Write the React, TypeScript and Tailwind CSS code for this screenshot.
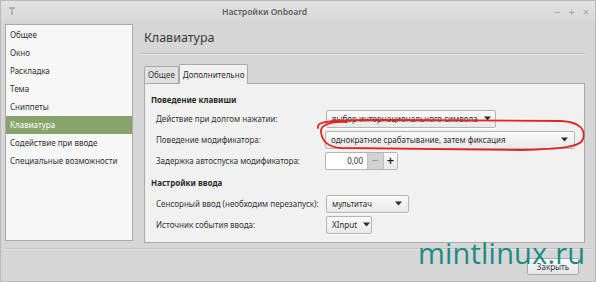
import React from "react";

const items = [
  "Общее",
  "Окно",
  "Раскладка",
  "Тема",
  "Сниппеты",
  "Клавиатура",
  "Содействие при вводе",
  "Специальные возможности",
];

function Arrow() {
  return (
    <svg width="7" height="5" viewBox="0 0 7 5" className="shrink-0">
      <path d="M0 0.5 L7 0.5 L3.5 4.5 Z" fill="#2b2b2b" />
    </svg>
  );
}

function Combo({ text, width }: { text: string; width: string }) {
  return (
    <div
      className={`${width} h-[18px] flex items-center justify-between gap-[6px] pl-[5px] pr-[6px] rounded-[2px] border border-[#b4b4b4] bg-gradient-to-b from-[#fafafa] to-[#e9e9e9] text-[#2e2e2e] shadow-[0_1px_0_#ffffff] whitespace-nowrap`}
    >
      <span>{text}</span>
      <Arrow />
    </div>
  );
}

function Row({ label, children }: { label: string; children: React.ReactNode }) {
  return (
    <div className="h-[21px] flex items-center">
      <div className="w-[175px] pl-[5px] text-[#333333] whitespace-nowrap">{label}</div>
      {children}
    </div>
  );
}

export default function App() {
  return (
    <div className="relative w-[596px] h-[282px] overflow-hidden bg-[#d6d6d6] border border-[#b9b9b9] font-['Noto_Sans',sans-serif] text-[8px] leading-[13px]">
      {/* Title bar */}
      <div className="h-[20px] flex items-center px-[6px] bg-gradient-to-b from-[#e2e2e2] to-[#d8d8d8]">
        <svg width="10" height="10" viewBox="0 0 10 10">
          <path d="M2 2 H8 M5 2 V9" stroke="#a5a5a5" strokeWidth="1.4" />
        </svg>
        <div className="flex-1 text-center pr-[42px] font-semibold text-[#5e5e5e] text-[8.5px]">
          Настройки Onboard
        </div>
        <div className="flex items-center gap-[8px] text-[#a3a3a3] text-[11px]">
          <span>−</span>
          <span>+</span>
          <span>×</span>
        </div>
      </div>

      {/* Body */}
      <div className="flex pl-[4px] pt-[3px]">
        {/* Sidebar */}
        <div className="w-[128px] h-[217px] bg-[#f7f7f7] border border-[#a9a9a9] pt-[1px]">
          {items.map((it) => (
            <div
              key={it}
              className={`h-[18px] leading-[18px] pl-[4px] whitespace-nowrap ${
                it === "Клавиатура" ? "bg-[#87a56a] text-white" : "text-[#303030]"
              }`}
            >
              {it}
            </div>
          ))}
        </div>

        {/* Main */}
        <div className="ml-[8px] w-[444px] flex flex-col">
          <div className="pl-[3px] pt-[5px] text-[12.5px] leading-[18px] text-[#3a3a3a]">
            Клавиатура
          </div>
          <div className="mt-[6px] h-px bg-[#bdbdbd]" />
          <div className="h-px bg-[#e6e6e6]" />

          {/* Tabs */}
          <div className="mt-[8px] pl-[3px] flex items-end h-[20px]">
            <div className="h-[17px] px-[3px] leading-[16px] border border-[#a9a9a9] border-b-0 bg-[#e1e1e1] text-[#3a3a3a] rounded-t-[2px]">
              Общее
            </div>
            <div className="relative z-10 h-[20px] -mb-px px-[3px] leading-[19px] border border-[#a9a9a9] border-b-0 bg-[#f1f1f1] text-[#2e2e2e] rounded-t-[2px]">
              Дополнительно
            </div>
          </div>

          {/* Panel */}
          <div className="ml-[3px] w-[441px] h-[160px] border border-[#a9a9a9] bg-[#f1f1f1] pl-[6px] pt-[9px]">
            <div className="font-bold text-[#2a2a2a]">Поведение клавиши</div>
            <div className="mt-[2px]">
              <Row label="Действие при долгом нажатии:">
                <Combo text="выбор интернационального символа" width="w-[170px]" />
              </Row>
              <Row label="Поведение модификатора:">
                <div className="-ml-px">
                  <Combo text="однократное срабатывание, затем фиксация" width="w-[250px]" />
                </div>
              </Row>
              <Row label="Задержка автоспуска модификатора:">
                <div className="-ml-px h-[18px] flex border border-[#b4b4b4] rounded-[2px] bg-white">
                  <div className="w-[41px] text-right pr-[4px] leading-[16px] text-[#2e2e2e]">0,00</div>
                  <div className="w-[16px] flex items-center justify-center bg-[#d2d2d2] text-[#9a9a9a] text-[12px] border-l border-[#c0c0c0]">
                    −
                  </div>
                  <div className="w-[14px] flex items-center justify-center bg-gradient-to-b from-[#fafafa] to-[#e9e9e9] text-[#222] text-[13px] font-semibold border-l border-[#c0c0c0]">
                    +
                  </div>
                </div>
              </Row>
            </div>

            <div className="mt-[5px] font-bold text-[#2a2a2a]">Настройки ввода</div>
            <div className="mt-[4px]">
              <Row label="Сенсорный ввод (необходим перезапуск):">
                <Combo text="мультитач" width="w-[83px]" />
              </Row>
              <Row label="Источник события ввода:">
                <Combo text="XInput" width="w-[46px]" />
              </Row>
            </div>
          </div>
        </div>
      </div>

      {/* Bottom separator */}
      <div className="mt-[5px] mx-[4px] h-px bg-[#c4c4c4]" />
      <div className="mx-[4px] h-px bg-[#e4e4e4]" />

      {/* Button row */}
      <div className="flex justify-end pr-[16px] pt-[8px]">
        <div className="w-[52px] h-[17px] rounded-[2px] border border-[#aaaaaa] bg-gradient-to-b from-[#fafafa] to-[#e6e6e6] text-[#333] text-center leading-[15px]">
          Закрыть
        </div>
      </div>

      {/* Watermark overlay */}
      <div className="absolute left-[417px] top-[237px] font-['Open_Sans',sans-serif] text-[29px] leading-[29px] text-[#1b8c84] tracking-[0.2px]">
        mintlinux.ru
      </div>

      {/* Red hand-drawn ellipse overlay */}
      <svg className="absolute left-0 top-0 pointer-events-none" width="596" height="282">
        <path
          d="M317 127 C315 120 330 119 380 119 L560 120 C578 121 585 128 582 138 C580 146 560 148 520 149 L340 147 C326 146 321 140 320 131 C319 124 330 120 346 121"
          fill="none"
          stroke="#e0261f"
          strokeWidth="1.8"
          strokeLinecap="round"
        />
      </svg>
    </div>
  );
}
